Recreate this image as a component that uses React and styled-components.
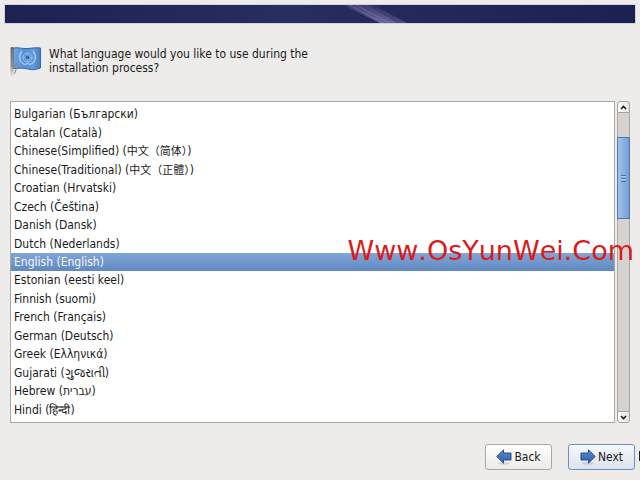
import React, { useState } from "react"
import styled, { createGlobalStyle } from "styled-components"

const languages = [
  { name: "Bulgarian", native: "Български" },
  { name: "Catalan", native: "Català" },
  { name: "Chinese(Simplified)", native: "中文（简体）", cjk: true },
  { name: "Chinese(Traditional)", native: "中文（正體）", cjk: true },
  { name: "Croatian", native: "Hrvatski" },
  { name: "Czech", native: "Čeština" },
  { name: "Danish", native: "Dansk" },
  { name: "Dutch", native: "Nederlands" },
  { name: "English", native: "English" },
  { name: "Estonian", native: "eesti keel" },
  { name: "Finnish", native: "suomi" },
  { name: "French", native: "Français" },
  { name: "German", native: "Deutsch" },
  { name: "Greek", native: "Ελληνικά" },
  { name: "Gujarati", native: "ગુજરાતી" },
  { name: "Hebrew", native: "עברית" },
  { name: "Hindi", native: "हिन्दी" },
]

const BannerArt = () => (
  <svg width="100%" height="100%" viewBox="0 0 630 18" preserveAspectRatio="none" aria-hidden="true">
    <defs>
      <linearGradient id="night">
        <stop offset="0" stopColor="#1c2351" />
        <stop offset="0.45" stopColor="#272e60" />
        <stop offset="0.6" stopColor="#242a5b" />
        <stop offset="1" stopColor="#1b2150" />
      </linearGradient>
      <linearGradient id="beam" x1="0" y1="0" x2="0" y2="1">
        <stop offset="0" stopColor="#5a568e" stopOpacity="0.5" />
        <stop offset="1" stopColor="#7d74ad" stopOpacity="0.9" />
      </linearGradient>
    </defs>
    <rect width="630" height="18" fill="url(#night)" />
    <path d="M338 0h30l34 18h-27z" fill="url(#beam)" opacity="0.5" />
    <path d="M340 0h22l30 18h-17z" fill="url(#beam)" opacity="0.6" />
    <path d="M344 0h2l34 18h-3zM350 0h2l34 18h-3z" fill="#9188bd" opacity="0.4" />
  </svg>
)

const FlagIcon = () => (
  <svg width="32" height="32" viewBox="0 0 32 32" aria-hidden="true">
    <defs>
      <linearGradient id="cloth">
        <stop offset="0" stopColor="#6fa3dc" />
        <stop offset="0.4" stopColor="#5790d4" />
        <stop offset="0.75" stopColor="#6298d8" />
        <stop offset="1" stopColor="#457dc5" />
      </linearGradient>
      <linearGradient id="pole" x1="0" y1="0" x2="0" y2="1">
        <stop offset="0" stopColor="#686c68" />
        <stop offset="0.65" stopColor="#8f928e" />
        <stop offset="1" stopColor="#c9c9c6" stopOpacity="0.2" />
      </linearGradient>
    </defs>
    <path d="M3 1C9 0 12 2 18 1.500C23 1 25 0.500 30.500 1V21C26 22.500 23 23.500 18 22C12 20.500 9 21.500 3 21.500Z" fill="url(#cloth)" stroke="#3468ae" />
    <g fill="none" stroke="#a9caee">
      <circle cx="17.500" cy="10.500" r="4.500" strokeWidth="0.800" />
      <circle cx="17.500" cy="10.500" r="2.500" strokeWidth="0.600" />
      <path d="M17.500 6v9M13 10.500h9" strokeWidth="0.500" />
      <path d="M12 4C8 9 9 15.500 15 17.500l2.500-1 2.500 1C26 15.500 27 9 23 4" strokeWidth="1.300" />
    </g>
    <circle cx="17.500" cy="10.500" r="2" fill="#2f66ae" />
    <rect x="0.500" y="0" width="3" height="30" rx="1" fill="url(#pole)" />
    <path d="M3.500 21c1-4 4-6 4-3l-3 9" fill="none" stroke="#868b8a" />
  </svg>
)

const ArrowIcon = ({ flip }) => (
  <svg width="16" height="16" viewBox="0 0 16 16" aria-hidden="true">
    <defs>
      <linearGradient id={flip ? "arrowR" : "arrowL"} x1="0" y1="0" x2="0" y2="1">
        <stop offset="0" stopColor="#5c8ccb" />
        <stop offset="1" stopColor="#2d5fa8" />
      </linearGradient>
    </defs>
    <ellipse cx="8" cy="14.500" rx="6" ry="1.300" fill="#000" opacity="0.12" />
    <path
      d="M0.800 7.500L7.500 0.800V4H15v7H7.500v3.200z"
      transform={flip ? "translate(16 0) scale(-1 1)" : undefined}
      fill={`url(#${flip ? "arrowR" : "arrowL"})`}
      stroke="#28518f"
      strokeLinejoin="round"
    />
  </svg>
)

const Chevron = ({ down }) => (
  <svg width="7" height="5" viewBox="0 0 7 5" aria-hidden="true">
    <path d={down ? "M1 1l2.500 2.500L6 1" : "M1 4l2.500-2.500L6 4"} fill="none" stroke="#1c1c1c" strokeWidth="1.600" />
  </svg>
)

const App = () => {
  const [selected, setSelected] = useState("English")

  return (
    <>
      <GlobalStyle />
      <Page>
        <Banner>
          <BannerArt />
        </Banner>
        <Header>
          <FlagIcon />
          <Question id="question">What language would you like to use during the installation process?</Question>
        </Header>
        <Picker>
          <LanguageList role="radiogroup" aria-labelledby="question">
            {languages.map(({ name, native, cjk }) => (
              <Language key={name} $active={name === selected}>
                <input type="radio" name="language" checked={name === selected} onChange={() => setSelected(name)} />
                <span>
                  {name} (<Native $small={cjk}>{native}</Native>)
                </span>
              </Language>
            ))}
          </LanguageList>
          <Scrollbar>
            <ScrollButton type="button" aria-label="Scroll up">
              <Chevron />
            </ScrollButton>
            <Track>
              <Thumb>
                <Grip />
              </Thumb>
            </Track>
            <ScrollButton type="button" aria-label="Scroll down" $down>
              <Chevron down />
            </ScrollButton>
          </Scrollbar>
          <Watermark>Www.OsYunWei.Com</Watermark>
        </Picker>
        <Footer>
          <NavButton type="button">
            <ArrowIcon />
            Back
          </NavButton>
          <NavButton type="button" $primary>
            <ArrowIcon flip />
            Next
          </NavButton>
        </Footer>
        <PointerEdge />
      </Page>
    </>
  )
}

const GlobalStyle = createGlobalStyle`
  * {
    box-sizing: border-box;
  }
  body {
    margin: 0;
    background: #edecea;
    color: #1a1a1a;
    font-family: "DejaVu Sans Condensed", "DejaVu Sans", "Noto Sans CJK SC", sans-serif;
    font-size: 12px;
  }
  button {
    font: inherit;
    color: inherit;
    padding: 0;
  }
`

const Page = styled.div`
  position: relative;
  min-height: 100vh;
  display: flex;
  flex-direction: column;
  padding: 4px 4px 10px;
`

const Banner = styled.div`
  height: 20px;
  border: 1px solid #d3d1e0;

  svg {
    display: block;
  }
`

const Header = styled.header`
  display: flex;
  align-items: flex-start;
  gap: 7px;
  padding: 23px 6px 22px;
`

const Question = styled.h1`
  margin: 0;
  max-width: 280px;
  font-size: 12px;
  font-weight: 400;
  line-height: 14px;
`

const Picker = styled.main`
  position: relative;
  flex: 1;
  display: flex;
  gap: 2px;
  padding: 0 6px;
`

const LanguageList = styled.div`
  flex: 1;
  display: flex;
  flex-direction: column;
  padding: 3px 0;
  background: #fff;
  border: 1px solid #a9a7a4;
`

const Language = styled.label`
  flex: 1;
  display: flex;
  align-items: center;
  padding-left: 3px;
  line-height: 18px;
  white-space: nowrap;
  color: ${(p) => (p.$active ? "#f4f7fc" : "#1a1a1a")};
  background: ${(p) => (p.$active ? "linear-gradient(#80a5d8, #6189c0)" : "none")};

  input {
    appearance: none;
    width: 0;
    height: 0;
    margin: 0;
  }
`

const Native = styled.span`
  font-size: ${(p) => (p.$small ? "11px" : "12px")};
  line-height: 1;
`

const Scrollbar = styled.div`
  width: 13px;
  display: flex;
  flex-direction: column;
`

const ScrollButton = styled.button`
  height: 12px;
  display: flex;
  align-items: center;
  justify-content: center;
  background: linear-gradient(90deg, #fff, #e6e5e3);
  border: 1px solid #a3a19e;
  border-radius: ${(p) => (p.$down ? "0 0 3px 3px" : "3px 3px 0 0")};
`

const Track = styled.div`
  flex: 1;
  display: grid;
  grid-template-rows: 24fr 82fr 192fr;
  background: #d5d2d0;
  border: solid #a9a7a4;
  border-width: 0 1px;
`

const Thumb = styled.div`
  grid-row: 2;
  margin: 0 -1px;
  display: flex;
  align-items: center;
  justify-content: center;
  background: linear-gradient(90deg, #a0c3ee, #769fd6);
  border: 1px solid #4f78ae;
`

const Grip = styled.span`
  width: 5px;
  height: 7px;
  background: repeating-linear-gradient(#4a6fa5 0 1px, #b4cff0 1px 2px, transparent 2px 3px);
`

const Watermark = styled.div`
  position: absolute;
  top: 134px;
  right: 2px;
  color: #dc1a1a;
  font-family: "DejaVu Sans", sans-serif;
  font-size: 27px;
  font-kerning: none;
  line-height: 32px;
  pointer-events: none;
`

const Footer = styled.footer`
  display: flex;
  justify-content: flex-end;
  gap: 16px;
  padding: 21px 1px 0;
`

const NavButton = styled.button`
  width: 67px;
  height: 26px;
  display: flex;
  align-items: center;
  justify-content: center;
  gap: 2px;
  border: 1px solid ${(p) => (p.$primary ? "#6a8fc4" : "#a9a7a4")};
  border-radius: 3px;
  background: ${(p) => (p.$primary ? "linear-gradient(#f6f8fc, #dde3ed)" : "linear-gradient(#fff, #ecebe9)")};
`

// mouse pointer parked at the right edge, only its side is visible
const PointerEdge = styled.span`
  position: absolute;
  right: 0;
  bottom: 19px;
  width: 1px;
  height: 10px;
  background: #222;
`

export default App
